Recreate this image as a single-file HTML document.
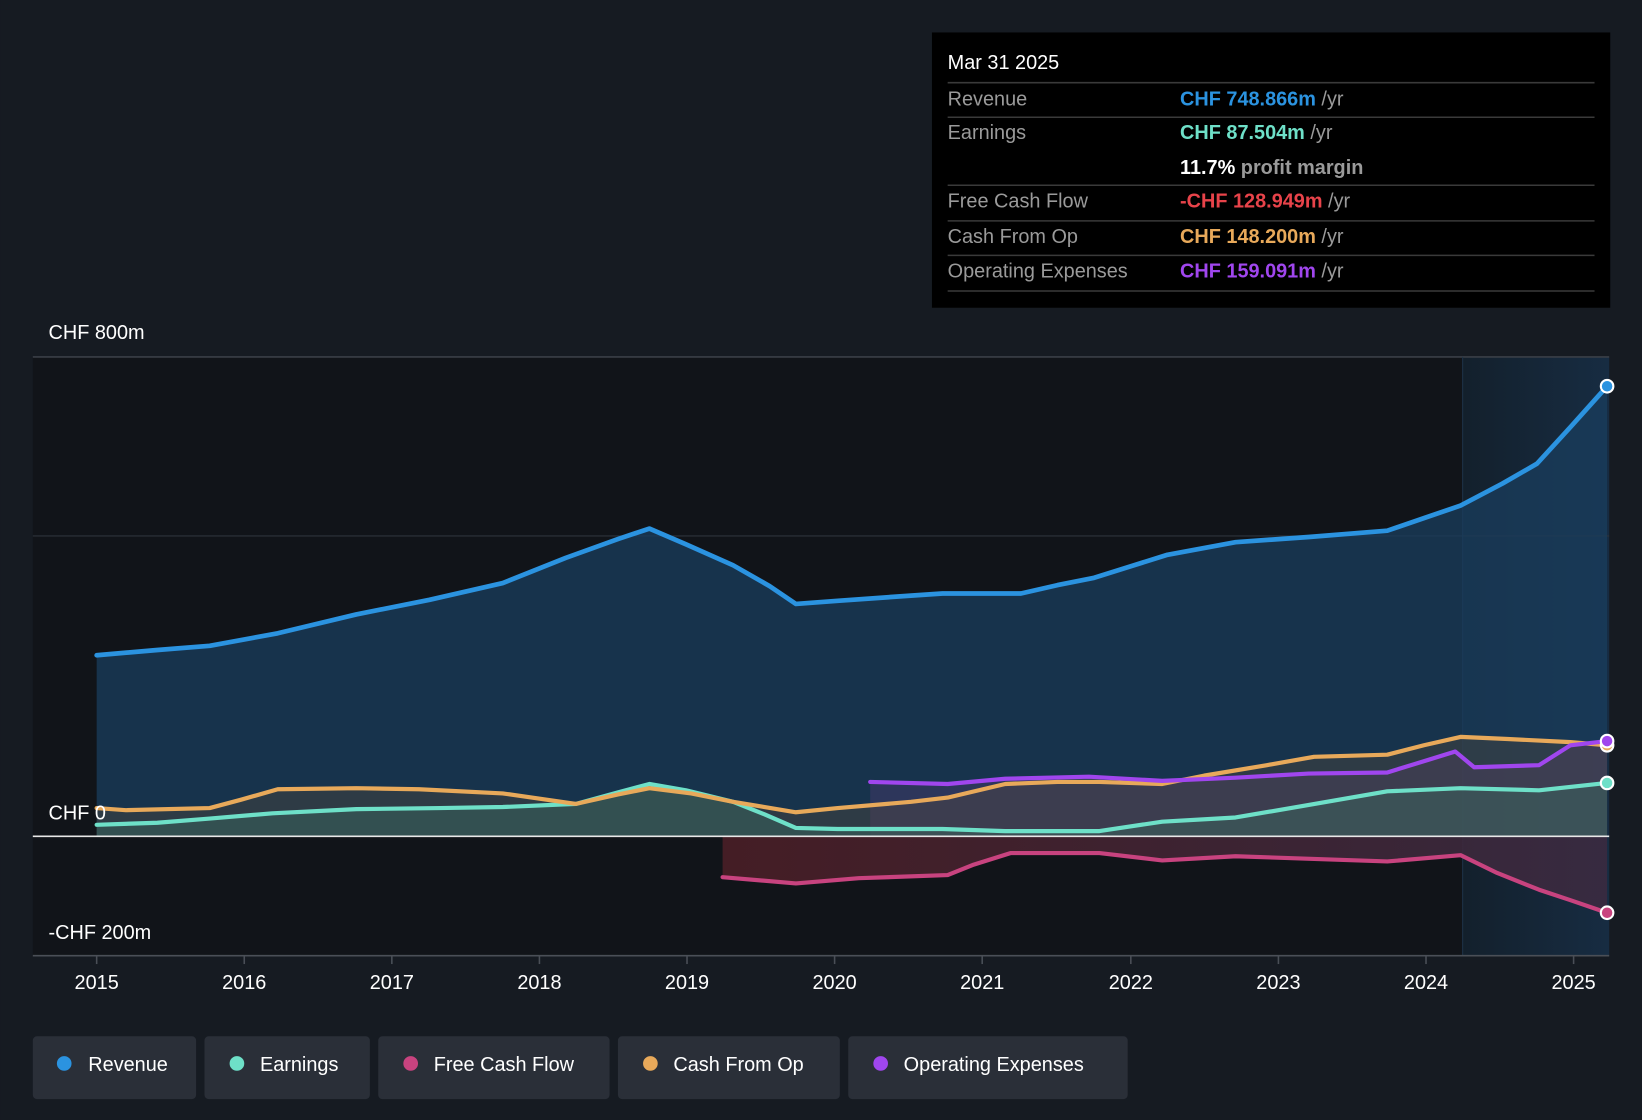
<!DOCTYPE html>
<html><head><meta charset="utf-8"><style>
html,body{margin:0;padding:0;background:#161b22;width:1642px;height:1120px;overflow:hidden}
svg{display:block}
text{font-family:"Liberation Sans",Arial,sans-serif}
</style></head><body>
<svg width="1642" height="1120" viewBox="0 0 1568 1070" xmlns="http://www.w3.org/2000/svg">
<defs>
<linearGradient id="hl" x1="0" x2="1" y1="0" y2="0"><stop offset="0" stop-color="#13202c"/><stop offset="1" stop-color="#172c42"/></linearGradient>
<linearGradient id="fcf" x1="0" x2="1" y1="0" y2="0"><stop offset="0" stop-color="#4a1e26"/><stop offset="1" stop-color="#3a2a40"/></linearGradient>
</defs>
<rect width="1568" height="1070" fill="#161b22"/>
<rect x="31" y="341" width="1366" height="572" fill="#111419"/>
<rect x="1397" y="341" width="140" height="572" fill="url(#hl)"/>
<line x1="31" y1="341" x2="1537" y2="341" stroke="#3a3f47" stroke-width="1.5"/>
<line x1="31" y1="512" x2="1537" y2="512" stroke="#2e333b" stroke-width="1"/>
<line x1="1397" y1="341" x2="1397" y2="913" stroke="#1e3348" stroke-width="1"/>
<!-- revenue fill -->
<path d="M92,626 L150,621 L200,617 L265,605 L340,587 L410,573 L480,557 L540,533 L590,515 L620,505 L655,520 L700,540 L735,560 L760,577 L800,574 L870,569 L900,567 L975,567 L1010,559 L1045,552 L1080,541 L1115,530 L1180,518 L1250,513 L1325,507 L1360,495 L1395,483 L1435,462 L1468,443 L1500,408 L1535,369 L1535,799 L92,799 Z" fill="#1a3d5e" fill-opacity="0.75"/>
<!-- opex fill -->
<path d="M831,747 L905,749 L960,744 L1040,742 L1110,746 L1180,743 L1250,739 L1325,738 L1390,718 L1408,733 L1470,731 L1500,712 L1535,708 L1535,799 L831,799 Z" fill="#4a3a6e" fill-opacity="0.45"/>
<!-- cfo fill -->
<path d="M92,772 L120,774 L200,772 L230,764 L265,754 L340,753 L400,754 L480,758 L550,768 L590,759 L620,753 L660,758 L700,766 L760,776 L800,772 L870,766 L905,762 L960,749 L1010,747 L1050,747 L1110,749 L1150,741 L1210,731 L1255,723 L1325,721 L1360,712 L1395,704 L1440,706 L1500,709 L1535,712 L1535,799 L92,799 Z" fill="#5a4a3a" fill-opacity="0.35"/>
<!-- earnings fill -->
<path d="M92,788 L150,786 L200,782 L260,777 L340,773 L420,772 L480,771 L550,768 L590,757 L620,749 L655,755 L700,766 L730,778 L760,791 L800,792 L900,792 L960,794 L1050,794 L1110,785 L1180,781 L1250,769 L1325,756 L1395,753 L1470,755 L1535,748 L1535,799 L92,799 Z" fill="#3a6a60" fill-opacity="0.45"/>
<!-- fcf fill -->
<path d="M690,799 L690,838 L760,844 L820,839 L905,836 L930,826 L965,815 L1050,815 L1110,822 L1180,818 L1325,823 L1395,817 L1430,834 L1470,850 L1500,860 L1535,872 L1535,799 Z" fill="url(#fcf)" fill-opacity="0.9"/>
<line x1="31" y1="799" x2="1537" y2="799" stroke="#e8e8e8" stroke-width="1.5"/>
<g fill="none" stroke-width="4" stroke-linejoin="round" stroke-linecap="round">
<path d="M690,838 L760,844 L820,839 L905,836 L930,826 L965,815 L1050,815 L1110,822 L1180,818 L1325,823 L1395,817 L1430,834 L1470,850 L1500,860 L1535,872" stroke="#c8437f"/>
<path d="M92,788 L150,786 L200,782 L260,777 L340,773 L420,772 L480,771 L550,768 L590,757 L620,749 L655,755 L700,766 L730,778 L760,791 L800,792 L900,792 L960,794 L1050,794 L1110,785 L1180,781 L1250,769 L1325,756 L1395,753 L1470,755 L1535,748" stroke="#6ee0c8"/>
<path d="M92,772 L120,774 L200,772 L230,764 L265,754 L340,753 L400,754 L480,758 L550,768 L590,759 L620,753 L660,758 L700,766 L760,776 L800,772 L870,766 L905,762 L960,749 L1010,747 L1050,747 L1110,749 L1150,741 L1210,731 L1255,723 L1325,721 L1360,712 L1395,704 L1440,706 L1500,709 L1535,712" stroke="#e8a95a"/>
<path d="M831,747 L905,749 L960,744 L1040,742 L1110,746 L1180,743 L1250,739 L1325,738 L1390,718 L1408,733 L1470,731 L1500,712 L1535,708" stroke="#a046ee"/>
<path d="M92,626 L150,621 L200,617 L265,605 L340,587 L410,573 L480,557 L540,533 L590,515 L620,505 L655,520 L700,540 L735,560 L760,577 L800,574 L870,569 L900,567 L975,567 L1010,559 L1045,552 L1080,541 L1115,530 L1180,518 L1250,513 L1325,507 L1360,495 L1395,483 L1435,462 L1468,443 L1500,408 L1535,369" stroke="#2b93e0" stroke-width="4.5"/>
</g>
<g stroke="#fff" stroke-width="2">
<circle cx="1535" cy="369" r="6" fill="#2b93e0"/>
<circle cx="1535" cy="712" r="6" fill="#e8a95a"/>
<circle cx="1535" cy="708" r="6" fill="#a046ee"/>
<circle cx="1535" cy="748" r="6" fill="#6ee0c8"/>
<circle cx="1535" cy="872" r="6" fill="#c8437f"/>
</g>
<line x1="31" y1="913" x2="1537" y2="913" stroke="#4a4f57" stroke-width="1.5"/>
<g stroke="#4a4f57" stroke-width="1.5">
<line x1="92" y1="913" x2="92" y2="921"/><line x1="233" y1="913" x2="233" y2="921"/><line x1="374" y1="913" x2="374" y2="921"/><line x1="515" y1="913" x2="515" y2="921"/><line x1="656" y1="913" x2="656" y2="921"/><line x1="797" y1="913" x2="797" y2="921"/><line x1="938" y1="913" x2="938" y2="921"/><line x1="1080" y1="913" x2="1080" y2="921"/><line x1="1221" y1="913" x2="1221" y2="921"/><line x1="1362" y1="913" x2="1362" y2="921"/><line x1="1503" y1="913" x2="1503" y2="921"/>
</g>
<g fill="#fff" font-size="19" text-anchor="middle">
<text x="92" y="945">2015</text><text x="233" y="945">2016</text><text x="374" y="945">2017</text><text x="515" y="945">2018</text><text x="656" y="945">2019</text><text x="797" y="945">2020</text><text x="938" y="945">2021</text><text x="1080" y="945">2022</text><text x="1221" y="945">2023</text><text x="1362" y="945">2024</text><text x="1503" y="945">2025</text>
</g>
<g fill="#fff" font-size="19">
<text x="46" y="324">CHF 800m</text>
<text x="46" y="783">CHF 0</text>
<text x="46" y="897">-CHF 200m</text>
</g>
<!-- tooltip -->
<rect x="890" y="31" width="648" height="263" fill="#000"/>
<g stroke="#3a3a3a" stroke-width="1.5">
<line x1="905" y1="79" x2="1523" y2="79"/><line x1="905" y1="112" x2="1523" y2="112"/><line x1="905" y1="177" x2="1523" y2="177"/><line x1="905" y1="211" x2="1523" y2="211"/><line x1="905" y1="244" x2="1523" y2="244"/><line x1="905" y1="278" x2="1523" y2="278"/>
</g>
<g font-size="19">
<text x="905" y="66" fill="#fff">Mar 31 2025</text>
<text x="905" y="101" fill="#9a9a9a">Revenue</text>
<text x="905" y="133" fill="#9a9a9a">Earnings</text>
<text x="905" y="198" fill="#9a9a9a">Free Cash Flow</text>
<text x="905" y="232" fill="#9a9a9a">Cash From Op</text>
<text x="905" y="265" fill="#9a9a9a">Operating Expenses</text>
<text x="1127" y="101" font-weight="bold" fill="#2b93e0">CHF 748.866m <tspan fill="#9a9a9a" font-weight="normal">/yr</tspan></text>
<text x="1127" y="133" font-weight="bold" fill="#6ee0c8">CHF 87.504m <tspan fill="#9a9a9a" font-weight="normal">/yr</tspan></text>
<text x="1127" y="166" font-weight="bold" fill="#fff">11.7% <tspan fill="#9a9a9a">profit margin</tspan></text>
<text x="1127" y="198" font-weight="bold" fill="#e8434a">-CHF 128.949m <tspan fill="#9a9a9a" font-weight="normal">/yr</tspan></text>
<text x="1127" y="232" font-weight="bold" fill="#e8a95a">CHF 148.200m <tspan fill="#9a9a9a" font-weight="normal">/yr</tspan></text>
<text x="1127" y="265" font-weight="bold" fill="#a046ee">CHF 159.091m <tspan fill="#9a9a9a" font-weight="normal">/yr</tspan></text>
</g>
<!-- legend -->
<g fill="#2a2f38">
<rect x="31" y="990" width="156" height="60" rx="4"/>
<rect x="195" y="990" width="158" height="60" rx="4"/>
<rect x="361" y="990" width="221" height="60" rx="4"/>
<rect x="590" y="990" width="212" height="60" rx="4"/>
<rect x="810" y="990" width="267" height="60" rx="4"/>
</g>
<circle cx="61" cy="1016" r="7" fill="#2b93e0"/>
<circle cx="226" cy="1016" r="7" fill="#6ee0c8"/>
<circle cx="392" cy="1016" r="7" fill="#c8437f"/>
<circle cx="621" cy="1016" r="7" fill="#e8a95a"/>
<circle cx="841" cy="1016" r="7" fill="#a046ee"/>
<g fill="#fff" font-size="19">
<text x="84" y="1023">Revenue</text>
<text x="248" y="1023">Earnings</text>
<text x="414" y="1023">Free Cash Flow</text>
<text x="643" y="1023">Cash From Op</text>
<text x="863" y="1023">Operating Expenses</text>
</g>
</svg>
</body></html>
